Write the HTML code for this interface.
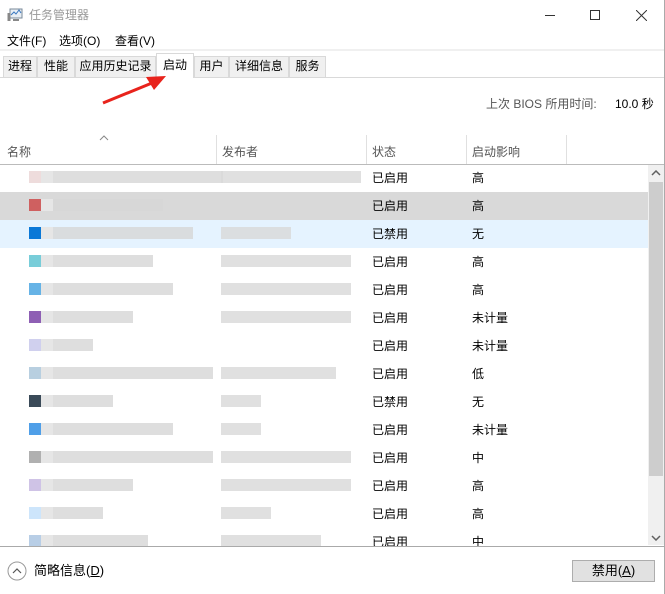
<!DOCTYPE html>
<html><head><meta charset="utf-8"><style>
*{margin:0;padding:0;box-sizing:border-box}
body{width:665px;height:594px;background:#fff;position:relative;overflow:hidden;font-family:"Liberation Sans","Noto Sans CJK SC","Microsoft YaHei",sans-serif;font-size:12px;color:#000}
.a{position:absolute}
.tab{position:absolute;top:56px;height:21px;background:#f0f0f0;border:1px solid #d9d9d9;border-bottom:none;font-size:12px;line-height:19px;text-align:center}
.b{position:absolute;height:12px}
.t{position:absolute;font-size:12px;line-height:14px}
</style></head><body>
<div class="a" style="top:0;left:0;width:665px;height:594px;border-right:1px solid #aaa"></div>
<!-- title -->
<svg class="a" style="left:7px;top:8px" width="16" height="14" viewBox="0 0 16 14"><rect x="3" y="1" width="12" height="9" fill="#e8eef4" stroke="#7a8a99"/><path d="M4 7 L7 4 L9 6 L12 2 L14 5" stroke="#3a78c0" fill="none"/><rect x="0.5" y="5" width="3" height="8" fill="#888"/><rect x="6" y="11" width="6" height="2" fill="#888"/></svg>
<div class="t" style="left:29px;top:8px;color:#999;font-size:12px">任务管理器</div>
<div class="a" style="left:545px;top:15px;width:10px;height:1px;background:#333"></div>
<div class="a" style="left:590px;top:10px;width:10px;height:10px;border:1px solid #333"></div>
<svg class="a" style="left:636px;top:10px" width="11" height="11"><path d="M0 0L11 11M11 0L0 11" stroke="#333"/></svg>
<!-- menu -->
<div class="t" style="left:7px;top:34px">文件(F)</div>
<div class="t" style="left:59px;top:34px">选项(O)</div>
<div class="t" style="left:115px;top:34px">查看(V)</div>
<div class="a" style="left:0;top:49px;width:664px;height:2px;background:#f0f0f0"></div>
<!-- tabs -->
<div class="a" style="left:0;top:77px;width:664px;height:1px;background:#d9d9d9"></div>
<div class="tab" style="left:3px;width:34px">进程</div>
<div class="tab" style="left:37px;width:38px">性能</div>
<div class="tab" style="left:75px;width:81px">应用历史记录</div>
<div class="tab" style="left:156px;width:38px;top:53px;height:25px;background:#fff;line-height:22px">启动</div>
<div class="tab" style="left:194px;width:35px">用户</div>
<div class="tab" style="left:229px;width:60px">详细信息</div>
<div class="tab" style="left:289px;width:37px">服务</div>
<!-- arrow -->
<svg class="a" style="left:100px;top:74px" width="72" height="32"><path d="M3 29 L52 9" stroke="#e8231c" stroke-width="3"/><path d="M66 2 L46 3 L54 16 Z" fill="#e8231c"/></svg>
<div class="t" style="left:486px;top:97px;color:#555">上次 BIOS 所用时间:</div>
<div class="t" style="left:615px;top:97px">10.0 秒</div>
<!-- header -->
<svg class="a" style="left:99px;top:135px" width="10" height="6"><path d="M1 5L5 1L9 5" stroke="#888" fill="none"/></svg>
<div class="t" style="left:7px;top:145px;color:#555">名称</div>
<div class="t" style="left:222px;top:145px;color:#555">发布者</div>
<div class="t" style="left:372px;top:145px;color:#555">状态</div>
<div class="t" style="left:472px;top:145px;color:#555">启动影响</div>
<div class="a" style="left:216px;top:135px;width:1px;height:29px;background:#e0e0e0"></div>
<div class="a" style="left:366px;top:135px;width:1px;height:29px;background:#e0e0e0"></div>
<div class="a" style="left:466px;top:135px;width:1px;height:29px;background:#e0e0e0"></div>
<div class="a" style="left:566px;top:135px;width:1px;height:29px;background:#e0e0e0"></div>
<div class="a" style="left:0;top:164px;width:664px;height:1px;background:#bbb"></div>
<!-- rows -->
<div class="a" style="left:0;top:192px;width:648px;height:28px;background:#d9d9d9"></div>
<div class="a" style="left:0;top:220px;width:648px;height:28px;background:#e5f3ff"></div>
<div id="rows"></div>
<script>
var R=[["已启用","高","#eedcdc",170,140],["已启用","高","#cf6060",110,0],["已禁用","无","#0a78d7",140,70],["已启用","高","#78cdd9",100,130],["已启用","高","#66b3e6",120,130],["已启用","未计量","#8e5fb4",80,130],["已启用","未计量","#d0d0ee",40,0],["已启用","低","#b8cfe0",160,115],["已禁用","无","#3a4a58",60,40],["已启用","未计量","#4f9fe8",120,40],["已启用","中","#b0b0b0",160,130],["已启用","高","#cfc3e6",80,130],["已启用","高","#cde5fb",50,50],["已启用","中","#b8cee6",95,100]];
var h="";R.forEach(function(r,i){var c=164+i*28;var y=c+7;
h+='<div class="b" style="left:29px;top:'+y+'px;width:12px;background:'+r[2]+'"></div>';
h+='<div class="b" style="left:41px;top:'+y+'px;width:12px;background:#e6e6e6"></div>';
if(r[3])h+='<div class="b" style="left:53px;top:'+y+'px;width:'+r[3]+'px;background:#d6d6d6;opacity:.8"></div>';
if(r[4])h+='<div class="b" style="left:221px;top:'+y+'px;width:'+r[4]+'px;background:#d8d8d8;opacity:.8"></div>';
h+='<div class="t" style="left:372px;top:'+(c+7)+'px">'+r[0]+'</div>';
h+='<div class="t" style="left:472px;top:'+(c+7)+'px">'+r[1]+'</div>';});
document.getElementById("rows").innerHTML=h;
</script>
<!-- scrollbar -->
<div class="a" style="left:648px;top:165px;width:16px;height:380px;background:#f0f0f0"></div>
<div class="a" style="left:649px;top:182px;width:14px;height:294px;background:#cdcdcd"></div>
<svg class="a" style="left:651px;top:170px" width="10" height="6"><path d="M1 5L5 1L9 5" stroke="#606060" stroke-width="1.5" fill="none"/></svg>
<svg class="a" style="left:651px;top:535px" width="10" height="6"><path d="M1 1L5 5L9 1" stroke="#606060" stroke-width="1.5" fill="none"/></svg>
<div class="a" style="left:0;top:546px;width:664px;height:1px;background:#aaa"></div>
<div class="a" style="left:0;top:547px;width:664px;height:47px;background:#fff"></div>
<!-- footer -->
<svg class="a" style="left:7px;top:561px" width="20" height="20"><circle cx="10" cy="10" r="9" fill="none" stroke="#999"/><path d="M6 12L10 8L14 12" stroke="#555" fill="none" stroke-width="1.2"/></svg>
<div class="t" style="left:34px;top:564px;font-size:13px">简略信息(<u>D</u>)</div>
<div class="a" style="left:572px;top:560px;width:83px;height:22px;background:#e1e1e1;border:1px solid #adadad;text-align:center;line-height:20px;font-size:13px">禁用(<u>A</u>)</div>
</body></html>
